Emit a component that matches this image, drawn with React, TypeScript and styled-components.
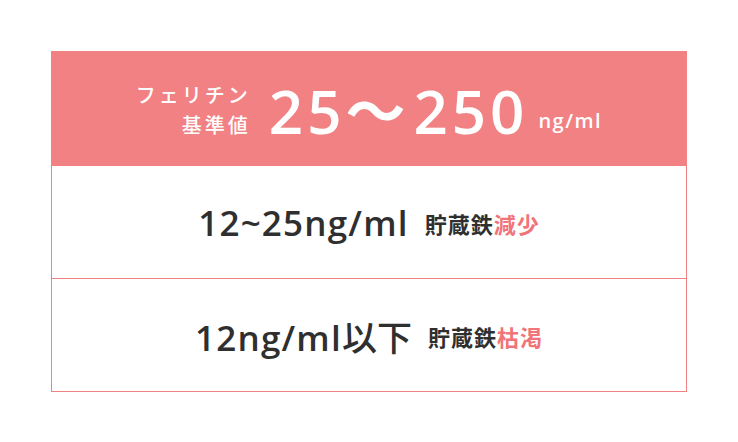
import React from 'react';
import styled, { createGlobalStyle } from 'styled-components';

const PINK = '#f18183';
const ACCENT = '#f07478';
const INK = '#2f2f2f';

const GlobalStyle = createGlobalStyle`
  html, body {
    margin: 0;
    padding: 0;
    background: #ffffff;
  }
  body {
    font-family: 'Open Sans', 'Noto Sans CJK JP', sans-serif;
  }
`;

const Page = styled.div`
  width: 738px;
  height: 442px;
  padding-top: 51px;
  box-sizing: border-box;
  display: flex;
  justify-content: center;
  align-items: flex-start;
`;

const Card = styled.section`
  width: 636px;
  border: 1px solid ${PINK};
  box-sizing: border-box;
  display: flex;
  flex-direction: column;
`;

const Header = styled.header`
  height: 114px;
  background: ${PINK};
  color: #ffffff;
  display: flex;
  align-items: center;
  justify-content: center;
`;

const Label = styled.div`
  display: flex;
  flex-direction: column;
  align-items: flex-end;
  font-family: 'Noto Sans CJK JP', sans-serif;
  font-size: 20px;
  font-weight: 500;
  line-height: 30px;
  letter-spacing: 3px;
  margin-right: 18px;
  margin-top: 2px;
`;

const BigRange = styled.span`
  font-family: 'Open Sans', 'Noto Sans CJK JP', sans-serif;
  font-size: 60px;
  font-weight: 600;
  letter-spacing: 4px;
  line-height: 1;
`;

const Tilde = styled.span`
  font-family: 'Noto Sans CJK JP', sans-serif;
  font-weight: 700;
  margin: 0 4px 0 0;
`;

const Unit = styled.span`
  font-family: 'Open Sans', sans-serif;
  font-size: 20px;
  font-weight: 600;
  letter-spacing: 1.5px;
  margin-left: 10px;
  align-self: flex-end;
  margin-bottom: 32px;
`;

const Row = styled.div`
  height: 112px;
  border-top: 1px solid ${PINK};
  display: flex;
  align-items: center;
  justify-content: center;
  color: ${INK};
  &:first-of-type {
    border-top: none;
  }
`;

const Value = styled.span`
  font-family: 'Open Sans', 'Noto Sans CJK JP', sans-serif;
  font-size: 35px;
  font-weight: 600;
  letter-spacing: 1.2px;
  margin-right: 16px;
`;

const Suffix = styled.span`
  font-family: 'Noto Sans CJK JP', sans-serif;
  font-weight: 500;
  letter-spacing: 0;
`;

const Note = styled.span`
  font-family: 'Noto Sans CJK JP', sans-serif;
  font-size: 22px;
  font-weight: 700;
  letter-spacing: 1px;
  margin-top: 2px;
`;

const Em = styled.span`
  color: ${ACCENT};
`;

const rows = [
  { value: '12~25ng/ml', suffix: '', state: '減少' },
  { value: '12ng/ml', suffix: '以下', state: '枯渇' },
];

export default function App() {
  return (
    <>
      <GlobalStyle />
      <Page>
        <Card>
          <Header>
            <Label>
              <span>フェリチン</span>
              <span>基準値</span>
            </Label>
            <BigRange>
              25<Tilde>～</Tilde>250
            </BigRange>
            <Unit>ng/ml</Unit>
          </Header>
          {rows.map((row) => (
            <Row key={row.value}>
              <Value>
                {row.value}
                {row.suffix && <Suffix>{row.suffix}</Suffix>}
              </Value>
              <Note>
                貯蔵鉄<Em>{row.state}</Em>
              </Note>
            </Row>
          ))}
        </Card>
      </Page>
    </>
  );
}
